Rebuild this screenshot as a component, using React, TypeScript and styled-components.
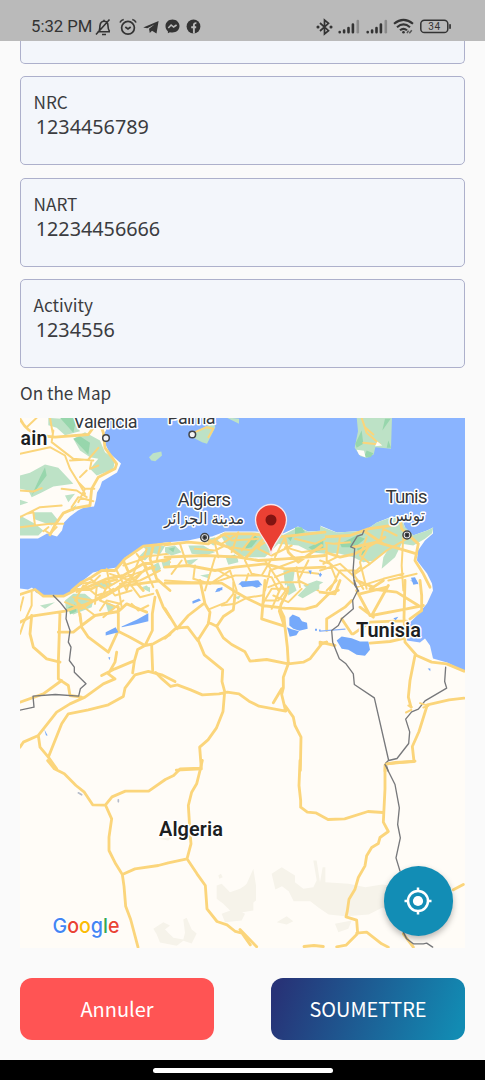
import React from 'react';
import styled, { createGlobalStyle } from 'styled-components';

const GlobalStyle = createGlobalStyle`
  * { box-sizing: border-box; }
  html, body { margin: 0; padding: 0; background: #fafafa; overflow: hidden; }
  button { font: inherit; border: 0; padding: 0; cursor: pointer; }
`;

const uiFont = `'Noto Sans CJK SC', 'Noto Sans', sans-serif`;

const Screen = styled.div`
  width: 485px;
  height: 1080px;
  display: flex;
  flex-direction: column;
  background: #fafafa;
  color: #3b3c40;
  font-family: ${uiFont};
  overflow: hidden;
`;

const StatusBar = styled.header`
  height: 41px;
  flex: none;
  display: flex;
  justify-content: space-between;
  background: #bababa;
  color: #333;
  padding: 12.5px 33.5px 0 31px;
`;

const StatusGroup = styled.div<{ $gap: number }>`
  display: flex;
  align-items: center;
  height: 28px;
  gap: ${(p) => p.$gap}px;
  svg { display: block; flex: none; }
`;

const Clock = styled.span`
  font: 400 16.7px/28px Roboto, sans-serif;
  width: 62px;
  margin-right: -4px;
  white-space: nowrap;
`;

const Form = styled.main`
  flex: 1;
  padding: 0 20px;
  display: flex;
  flex-direction: column;
`;

const Field = styled.label<{ $clipped?: boolean }>`
  display: flex;
  flex-direction: column;
  flex: none;
  height: ${(p) => (p.$clipped ? '22.5px' : '89px')};
  margin-bottom: 12.5px;
  padding: 14px 12.5px 0;
  background: #f3f6fb;
  border: 1.5px solid #adb0cb;
  border-radius: 5px;
  ${(p) => p.$clipped && 'border-top: 0; border-top-left-radius: 0; border-top-right-radius: 0;'}
`;

const FieldLabel = styled.span`
  font-size: 17.2px;
  line-height: 22px;
`;

const FieldValue = styled.span`
  font: 400 19.8px/26px 'Noto Sans', sans-serif;
  padding: 1px 0 0 2.2px;
`;

const SectionTitle = styled.h2`
  margin: 0;
  height: 37px;
  font-size: 17.1px;
  font-weight: 400;
  line-height: 24px;
  flex: none;
`;

const MapFrame = styled.section`
  position: relative;
  height: 530.5px;
  flex: none;
  overflow: hidden;
  > svg { display: block; }
`;

const LocateButton = styled.button`
  position: absolute;
  right: 12px;
  bottom: 12.5px;
  width: 69.5px;
  height: 69.5px;
  border-radius: 50%;
  background: #128db5;
  display: grid;
  place-items: center;
  box-shadow: 0 3px 6px rgba(0, 0, 0, 0.28);
`;

const Actions = styled.div`
  display: flex;
  justify-content: space-between;
  margin-top: 30px;
`;

const ActionButton = styled.button<{ $primary?: boolean }>`
  width: 194px;
  height: 62px;
  border-radius: 12px;
  color: #fff;
  font-size: ${(p) => (p.$primary ? '19.9px' : '20px')};
  line-height: 62px;
  background: ${(p) => (p.$primary ? 'linear-gradient(110deg, #273377 5%, #128bb3 95%)' : '#ff5454')};
`;

const NavBar = styled.footer`
  height: 20px;
  flex: none;
  display: flex;
  justify-content: center;
  background: #000;
  padding-top: 8px;
`;

const HomeHandle = styled.i`
  width: 180px;
  height: 4.5px;
  border-radius: 3px;
  background: #fff;
`;

const BellOff = () => (
  <svg width="17" height="18" viewBox="0 0 17 18" fill="none" stroke="#333" strokeWidth="1.6">
    <path d="M2.500 13.800h12.500M4 13.300c1-2 .7-4 1-6C5.500 4.500 7 3.300 9 3.300c2.500 0 4 2 4 4.700 0 2 .3 3.500 1.500 5.300M9 3.300V1.800M7 16.500h4M1 16.500 14.500 1.500" />
  </svg>
);

const AlarmClock = () => (
  <svg width="18" height="18" viewBox="0 0 18 18" fill="none" stroke="#333" strokeWidth="1.7">
    <circle cx="9" cy="9.800" r="6.400" />
    <path d="m6.300 9 2.700 2 2.700-2M1 4.500Q2 2 4.700 1.500M17 4.500Q16 2 13.300 1.500" />
  </svg>
);

const Telegram = () => (
  <svg width="16" height="16" viewBox="0 0 16 16" fill="#333">
    <path d="M.2 8.400 15.600 2 13.500 14.500 9 11.700l-2.200 2.300-.8-4.200L11.500 5.500 4.300 9.300z" />
  </svg>
);

const Messenger = () => (
  <svg width="15" height="15" viewBox="0 0 15 15">
    <path fill="#333" d="M7.500.5C3.400.5.5 3.400.5 7.200c0 2.100.9 3.900 2.400 5v2.100l2-1.100c.8.300 1.700.4 2.600.4 4 0 7-2.800 7-6.500S11.500.5 7.500.5z" />
    <path d="m3.300 9 2.800-3 2.500 2 3-2" fill="none" stroke="#bababa" strokeWidth="1.600" />
  </svg>
);

const Facebook = () => (
  <svg width="15" height="15" viewBox="0 0 15 15">
    <circle cx="7.500" cy="7.500" r="6.900" fill="#333" />
    <path d="M7.900 14.500V5.800q0-1.900 2.500-1.600M5.200 8.300h5" fill="none" stroke="#bababa" strokeWidth="1.900" />
  </svg>
);

const Bluetooth = () => (
  <svg width="17" height="18" viewBox="0 0 17 18" fill="none" stroke="#333" strokeWidth="1.700">
    <path d="m4 5 8.500 7.700L8.500 16V2l4 3.300L4 13" />
    <circle cx="2" cy="9" r=".7" fill="#333" />
    <circle cx="15" cy="9" r=".7" fill="#333" />
  </svg>
);

const Signal = () => (
  <svg width="22" height="15" viewBox="0 0 22 15" strokeWidth="2.600" strokeLinecap="round">
    <path d="M1.700 13v.2M6.100 11.500v1.700M10.500 9v4.200M14.900 5.500v7.700" stroke="#333" />
    <path d="M19.800 2v11.200" stroke="#8b8b8b" />
  </svg>
);

const Wifi = () => (
  <svg width="21" height="17" viewBox="0 0 21 17" fill="none" stroke="#333" strokeWidth="2.100">
    <path d="M1 5.700Q10.500-2 20 5.700M4 9.200q6.500-5.500 13 0M7 12.300q3.500-3 7 0" />
    <circle cx="10.500" cy="14.300" r="1.300" fill="#333" stroke="none" />
    <path d="m14 15.200 1.500-2.500M16.300 15.200l2.500-3" stroke="#555" strokeWidth="1.500" />
  </svg>
);

const Battery = () => (
  <svg width="32" height="15" viewBox="0 0 32 15">
    <rect x=".8" y="1.200" width="27" height="12.300" rx="3.600" fill="none" stroke="#333" strokeWidth="1.500" />
    <rect x="29.200" y="5" width="1.700" height="5" rx=".8" fill="#333" />
    <text x="14.200" y="10.900" textAnchor="middle" fontFamily="Roboto" fontSize="10" textLength="12" fill="#333">34</text>
  </svg>
);

const Tile = styled.g`
  fill: none;
  stroke-linejoin: round;
  stroke-linecap: round;
  .road { stroke: #fbd57b; stroke-width: 8.500px; }
  .minor { stroke: #fbd57b; stroke-width: 6px; }
  .border { stroke: #77787b; stroke-width: 4px; }
  .green { fill: #bde2c6; }
  .wood { fill: #97d6ac; }
  .water { fill: #75a9fa; }
  .sand { fill: #f6f3ea; }
`;

const PlaceName = styled.text<{ $bold?: boolean; $size?: number }>`
  font-family: Roboto, 'DejaVu Sans', sans-serif;
  font-size: ${(p) => p.$size ?? 19}px;
  font-weight: ${(p) => (p.$bold ? 600 : 400)};
  fill: ${(p) => (p.$bold ? '#1d1e21' : '#34373c')};
  stroke: #fff;
  stroke-width: 3px;
  stroke-linejoin: round;
  paint-order: stroke;
`;

const at = (x: number, y: number) => `translate(${x} ${y}) scale(.33333)`;

const CityDot = ({ x, y, capital }: { x: number; y: number; capital?: boolean }) => (
  <g stroke="#424448" strokeWidth="1.500">
    <circle cx={x} cy={y} r={capital ? 4 : 3.300} fill="#f4f4f4" />
    {capital && <circle cx={x} cy={y} r="1.700" fill="#222" />}
  </g>
);

const logo: [string, string][] = [
  ['G', '#4285f4'], ['o', '#ea4335'], ['o', '#fbbc05'], ['g', '#4285f4'], ['l', '#34a853'], ['e', '#ea4335'],
];

const MapDrawing = () => (
  <svg width="445" height="531" viewBox="20 417.500 445 531">
    <rect x="20" y="417" width="445" height="532" fill="#8ab4ff" />
    <g fill="#fffcf7">
      <path d="M20 417H111L106 430 103 435 105 443 110 453 121 463 117 472 107 478 102 481 100 487 97 492 96 499 94 506 84 507 78 510 70 516 64 522 62 530 57 536 47 533 38 538 20 538Z" />
      <path d="M20 588 28 589 32 587 36 592 43 595 53 595 65 595 73 590 82 584 83 580 93 572 110 568 117 567 125 557 143 546 165 542 188 540 202 537 212 536 225 531 255 531 283 533 298 526 308 531 325 530 320 525 337 532 353 531 365 530 377 522 392 516 402 518 405 527 413 535 427 530 433 527 433 533 425 540 418 550 417 560 427 573 432 583 433 590 427 603 417 615 410 622 408 630 407 640 420 642 425 638 430 645 433 658 447 662 465 671V949H20Z" />
    </g>

    {/* south-east Spain */}
    <Tile transform={at(10, 410)}>
      <path className="green" d="m115 22 75 5 20 35-45 12-25-22-25-8zM190 85l35-20 45 25 15 35 30 22-5 30-50 18-20-20 25-30-25-5-30-20zM30 195l30-8 45-25 40 10 45 48-60 8-35 18-30 14-10-20-25-5zM70 305l55 0 20 25-20 15-55-20zM30 315l45 25 25 20-15 15H30zM165 255l30-5-20 25zM175 300l25-18-10 20zM30 268l25 8-25 8z" />
      <path className="wood" d="m105 170 5 25-45 60 25-55zM190 85l20-8 30 20-5 35zM150 22h50l-10 45z" />
      <path className="green" d="m417 140 12-12 25-5 2 12-20 17-12-2z" />
      <path className="road" d="M30 25q20 40 60 50l45 5 100-8 22-30V22M265 22l15 45 5 45 35 48-5 15-50 25-20 35-5 50-45 8-35 15-25 35-15 30" />
      <path className="minor" d="m30 130 90-20 45 25 15 40 25 40 20 35M130 60l-5 35 65 50 60 5M120 22l8 45M30 240l40 3 25-10M30 320l60-30 65-5M155 235l45 5 30 20M30 350l90-10 40 0M100 362l15-12M205 215l20 20 28 0M180 150l55-3 30-35M210 200l20-20M185 290l20-30 45 12M75 345l-5-40-20 5M225 235l-20 40M265 165l-25 10 5-25M80 22 50 50M140 350l-20 20-15-10" />
    </Tile>

    {/* Balearic islands */}
    <Tile transform={at(165, 410)}>
      <path className="green" d="m70 75 75-40 6 15-25 50-15-5-20-10zM182 20l40 5v15z" />
      <path className="minor" d="m90 65 35-15 20 5-15 25" />
    </Tile>

    {/* Sardinia, northern Tunisia */}
    <Tile transform={at(320, 410)}>
      <path className="green" d="M110 20h106l-3 95-47-5-5 22-20 10-20-5-17-25 10-50z" />
      <path className="wood" d="m125 60 5 40-20 12-4-12zM195 25l17 0-25 35zM205 90l8 22-13 0zM140 120l20 8-8 12-20 0z" />
      <path className="minor" d="m125 22 15 45 40 35-50-5M135 50l25 22" />
      <path d="m110 118 22 3 5 20-20-8zM172 93l15 12-22 2z" fill="#fffcf7" />
      <path className="green" d="M0 347 50 366 100 363 135 360 170 336 215 320 245 326 255 350 280 374 320 361 340 351 336 368 315 385 280 405 245 400 225 440 185 475 190 440 205 415 165 450 130 455 100 440 60 430 0 425Z" />
      <path className="wood" d="m60 400 50-25 25 10-30 25-40 0zM110 415l45-15-30 35z" />
      <path className="road" d="m0 380 90-5 55-20 70-10 30-12M240 325l5 30 50 45-10 50 25 40 20 40M100 410l70-15 70 20 50 15M130 360l60 40M0 420l60 20 45-10 90-50" />
      <path className="minor" d="m105 490 45-30 50-40 60-35M150 400l-30 55 20 80M250 375l-5 90 5 75M20 400l0 50 80 70M205 510l85-20M0 480l60-20 45 40M150 460l-30-25 20-55M60 380l-10 60-40 20M110 530l80-25 60-15M30 540l30-60 45 0M120 470l-20 20 30 45M180 395l10-40 40 20M0 395l40 5 50-5M0 450l30 10 20 50-30 30" />
      <path className="water" d="m273 502 12-2 10 20-15 3zM0 485l6 8-6 6z" />
    </Tile>

    {/* Oran and the north-west coast */}
    <Tile transform={at(10, 580)}>
      <path className="green" d="m165 60 25-20 35 0 25 20-5 20-55 22-22-15zM250 10l40-8 25 10-40 12zM90 75l45-10-30 20zM285 62l35 15-25 20zM390 20l30 0 0 15z" />
      <path className="wood" d="m175 80 20-8 5 20-20 10z" />
      <path className="road" d="m30 42 45-15 25 20 60 0 40-20 40 0 40-20 40-10M30 125l35-18 100-15 60-20 60-25 50-30 110-15M150 95l-5 150 0 50 30 20 5 30 35 5M155 300l-55 40-70 25M30 500l10-15 45-20 55-70 40-25 45-20 55-40 35-15-20-15 20-35 5-30M275 285l40-20 55-23M85 465l5 35 25 30 25 35M115 530l40-100 20-30 60-12 60-15 45-25 5-25 30-40 40-10 40 10 40 20" />
      <path className="road" d="m65 105-5 55 10 40 40 35 40 10M145 155l45 0 25-20 40-30 70-12 25-23 60 25M210 100l5 40 20 30 60 45M325 80l0 70-30 65M320 150l40 20 45 25 25-5 50-28M435 50l-8 50 0 50-22 45-22 12-10 35-5 35M425 195l3 75M440 30l20 50 20 30" />
      <path className="minor" d="m30 160 10-30 25-55 0-40M220 15l-25 45 60 45M165 65l50 20 60-40M260 20l-5 50M280 0l35 45 50-15M325 20l10 60M190 50l60 10 60-35M365 70l20 20 30-15M340 60l-60 50M230 20l30 25 60-20M30 90l10-40M200 55l15 85M240 5l-40 30M290 20l-20 40 50 20M360 10l30 40 40-10M330 70l-40-10-20 30" />
      <path className="water" d="m287 155 30-15 8 15-38 10zM335 138l45-20 35-20 0 24-40 10-40 8zM103 447l10 18-5 0zM295 230h6l-3 9z" />
      <path className="border" d="m130 45 20 20 20 25-2 25 12 35-5 35 8 15-5 40 15 20 0 15 35 35-17 15-5 22-70-5-67 5 3 33-48 10" />
    </Tile>

    {/* Algiers to the eastern coast */}
    <Tile transform={at(10, 410)}>
      <path className="green" d="m385 440 25-25 25 5-30 30zM420 470l25-15 8 20-20 18zM455 455l25-10 0 25-20 3zM400 410l40-8 25 5-15 25-30-5zM395 530l15-5 10 10zM250 525l25-12 5 15z" />
      <path className="road" d="m185 540 30-25 30-15 30-20 40 0 30-35 55-38 80-8M210 540l80-35 50-10 60-35 80-15M340 450l20 45 40 45M430 405l-10 40 20 60 40 35" />
      <path className="minor" d="m240 505 45 30 60-35 90-30M290 475l10 50M380 430l30 40-40 45M370 490l20-50 85-10M320 480l30 60M400 460l30 70M450 410l-10 40 40 5M300 490l60 20 60-40M310 540l60-45M270 495l-20 20-40 5M340 465l60-20 10-30M330 520l60-10 60-30M350 540l10-30" />
    </Tile>
    <Tile transform={at(165, 410)}>
      <path className="green" d="M165 372 180 366 270 366 355 373 400 350 430 364 480 360V430L440 425 400 405 340 400 300 440 245 440 210 430 185 405ZM0 410 30 405 50 425 20 435 0 425ZM70 405 115 405 150 425 120 435 80 430ZM60 450 100 445 75 465ZM120 388 150 380 165 395 145 405Z" />
      <path className="wood" d="m250 395 20-20 10 10-20 25-20 5zM430 410l45-20 0 25-25 10zM390 350l20 0 10 15-30 8zM365 378l20-6-8 20zM185 440l25-8 10 20-30 8zM10 415l20-5-5 15z" />
      <path className="green" d="m355 480 35-5-5 35-25 15zM415 525l40-15 20 5-40 25zM105 495l30-5 0 15zM180 435l35 0 5 20-30 8zM0 455l15-5v18l-15 4z" />
      <path className="road" d="m0 403 70-8 60 5 50-30 80 0 80 10 140-15M0 440l120-5 100 5 60 10 80-5 120-10M0 470l70-5 80 15 60-10 90-10 60 15 120-5M130 390l60 20 50 35 70-75M360 385l10 40 30 30 70-50" />
      <path className="minor" d="m90 465-5 40 50 15 60-40 20 60M0 510l80 5 70 0 60-20 80 0 30-50M150 440l-30 100M240 450l20 40 60 10 20 40M300 450l60 90M330 500l50-20 80 10M300 540l15-60 80-30M395 470l10 60M430 450l-30 60 60 30M220 365l-20 60M270 370l-40 50M150 400l10 40M45 400l20 60M160 480l35 20M360 380l-30 60M120 385l50 15 40-25M300 375l-20 40 40 20 60-30M180 375l20 15 80-5M390 385l60 15 30-15M90 415l60 5 30-15M360 410l50 15 70-10M200 410l60 10 50-30M20 490l30-40M240 520l10-30" />
      <path className="water" d="m225 522 25-10 30-3 12 15-60 6zM430 480l10 0-3 12zM460 488l10 4-5 8zM152 537l20-6v8z" />
    </Tile>

    {/* high plateaus and the northern Sahara */}
    <Tile transform={at(165, 580)}>
      <path className="green" d="m398 45 30-30 35-10 0 20-50 28zM365 10l20-5 10 25-25 15zM208 50l20-5-8 12z" />
      <path className="road" d="m0 8 100 0 70 0 40 25 35 20 45 22 70 8 60 3 35-10 35-35 30-12M105 0l15 70 15 25-5 35-32 50-30-40-35 3-33 30M0 85l37 60M40 140l30-35 45-35M130 125l25 12 20 35 25 20 40 22 15 28 50-5 65 13 45-5 20-10 35-45 15-5M155 138l20-30 30-20 5-45M300 0l-5 55-5 60 30 10 38 12-15-45 5-20 20-40M345 85l12 25 3 30 7 60 3 50-15 40 0 32-5 20 12 50-80-15-30-15-30-22-35-5-25 5-50 3-35-15-40-15-20 5-25-22-20-20M98 175l20 48 55 45-2 35 8 30-5 60-20 50-25 35-25 22 5 65-75 4M350 325l-25 42M360 375l25 35 5 25 18 35-2 100" />
      <path className="minor" d="m135 85 50-20 20-25 0-35M170 75l40-5 35-18 50-8M310 20l40-15 50 0M320 85l30-70M290 75l30-50 50 0M325 45l45 20 40-40M300 60l40 0 30-40" />
      <path className="water" d="m82 62 20-8 6 6-25 10zM150 35l8-12 15-3-8 12zM220 12l10-10 35 0 22 15-12 5-20-8zM373 112l10-10 20 8 8 12 15 5 2 18-25 6-18-6-12-10zM366 140l14 6 22 6-8 12-20 5zM450 145h6v6h-6zM462 147h5v5h-5z" />
    </Tile>

    {/* central and southern Tunisia */}
    <Tile transform={at(320, 580)}>
      <path className="road" d="m255 0-3 110 3 75 35 40 45 20 45 5 52 22M0 185l45 10M150 188l60-5 45-10M155 105l50-90M300 0l5 45 0 45-35 25M155 105l105-20 50-10M285 225l-15 75-5 50 8 30M432 353l-45 5-65 15-25 80-20 45 5 45-55 3-30 5-2 20M0 35l45 5 15-40M110 30l40 75M120 40l80-20M150 25l80 10 65 40M20 150l0-35 55-35 20-20M95 160l-30-45M100 160l50-35 70-3 40 0M160 20l30-20M160 20l-50-20M120 80l40 30M0 190l20-5" />
      <path className="water" d="m50 180 15-12 30 5 25 10 25 0 5 25-15 18-25-3-25-15-20-3zM220 113l15-4-8 10zM323 264l8 0 0 8zM270 0h20l5 12z" />
      <path d="m0 152 75-6" stroke="#89b2f8" strokeWidth="4" />
      <path className="border" d="m103 0 10 30-15 30 2 25-35 30-10 20-20 15 3 35 20 50 20 15 22 30 3 32 60 40 43 188 25-6 35-45 3-35-12-38 18-22 20-8 20-25 65-38-6-20 3-43M205 540l-8 8 8 25" />
      <path className="minor" d="m258 396 16-8M265 375l10 5M300 368l25 8-15 5" />
    </Tile>
    <Tile transform={at(320, 410)}>
      <path className="border" d="m132 360-5 12-15 5-20 32 12 5-5 70 5 40 12 18" />
    </Tile>

    {/* southern Algeria */}
    <Tile transform={at(10, 760)}>
      <path className="sand" d="m625 345 8-5 5 10-10 5zM620 375l15-5 25 25 30-10 40-25 0 90-60 10-30-30-20-15zM635 460l40-15 30 15-10 20-50 5zM430 505l30-20 20 10-15 12 25 25 30 5 5-20-5-40 10-5 15 35 15 12-15 30-25-8-20 15-50-10-10-25zM445 235l40-5-10 10z" />
      <path className="road" d="m113 0 20 25 30 15 35 35 25 20 25 38 38 1 20-25 40-17 70 0 50-35 25-12 20-20 60-2M577 0l-7 30-10 40-15 25-10 40 5 80 3 35-12 45 30 45 25 35 5 70 30 38 30 10 25 20 20 5 25 35M531 295l-56 12-30 8-70 10-38 17M287 135l18 40-8 55 0 40 20 40 20 32 5 35 5 60 15 40 22 83" />
      <path d="m205 97 10 6M325 118v6" stroke="#b5bccb" strokeWidth="5" />
    </Tile>
    <Tile transform={at(240, 760)}>
      <path className="sand" d="m0 390 20-20 20-45 8 50 0 45-20 15-28 10zM95 340l30-20 40 25 0 20 25 20 30-5 10-20-10-60 10 0 10 65 8-45 8 0 0 45 70 5 50 10 50-8 40 5 0 60-40 5-40 20-70 5-50-5-30-20-25-20-50 0-15-30-20-15-20 10zM110 485l30-18 20 15-20 10zM285 490l50-10-10 25-30 10z" />
      <path className="road" d="m180 0-3 75 5 45 0 20 20 15 25 2 37 20 50-2 70-22 45 3M435 15l0 70-5 100 15 28-25 18-5 18-20 12-15 25-5 30-20 35-10 35-18 30-5 35-4 18 32 10 3 40-35 35-28 5M350 518l30-3 45 35 20 10M0 507l50 52M192 558l30-3 28 3M640 388l30-16M440 10l85-8M490 520l30 40" />
      <path className="border" d="m435 12 30 60 13 70-5 50 8 40-13 60 12 40M490 515l10 20 20 15 30 0 10-2 18 12" />
    </Tile>

    <CityDot x={106} y={437.500} />
    <CityDot x={192.300} y={434} />
    <CityDot x={204.700} y={537} capital />
    <CityDot x={407} y={534.500} capital />

    <PlaceName x="73.500" y="427" $size={18} textLength="64">Valencia</PlaceName>
    <PlaceName x="167.500" y="423" $size={18} textLength="48">Palma</PlaceName>
    <PlaceName x="20.500" y="444" $bold $size={19.500} textLength="27">ain</PlaceName>
    <PlaceName x="177.500" y="505.500" textLength="53.500">Algiers</PlaceName>
    <PlaceName x="204" y="523" $size={16} textAnchor="middle" textLength="80" lengthAdjust="spacingAndGlyphs">مدينة الجزائر</PlaceName>
    <PlaceName x="385.500" y="502.500" textLength="42">Tunis</PlaceName>
    <PlaceName x="407" y="520" $size={16} textAnchor="middle" textLength="36" lengthAdjust="spacingAndGlyphs">تونس</PlaceName>
    <PlaceName x="356" y="636.500" $bold $size={20} textLength="65">Tunisia</PlaceName>
    <PlaceName x="159" y="835.500" $bold $size={20} textLength="64">Algeria</PlaceName>

    <path d="M271 554.500C270 542 255.500 533 255.500 519.500a15.500 15.500 0 0 1 31 0C286.500 533 272 542 271 554.500Z" fill="#ea4033" stroke="#f8e9ed" strokeWidth="1.300" />
    <circle cx="271" cy="519.500" r="5.500" fill="#811411" />

    <text x="52.500" y="932.500" fontFamily="Inter, sans-serif" fontSize="20.500" fontWeight="500" textLength="67" lengthAdjust="spacingAndGlyphs" stroke="#fff" strokeWidth="2" style={{ paintOrder: 'stroke' }}>
      {logo.map(([letter, color], i) => <tspan key={i} fill={color}>{letter}</tspan>)}
    </text>
  </svg>
);

const LocateIcon = () => (
  <svg width="28" height="28" viewBox="0 0 28 28" fill="none" stroke="#fff" strokeWidth="2.500">
    <circle cx="14" cy="14" r="10" />
    <circle cx="14" cy="14" r="5.100" fill="#fff" stroke="none" />
    <path d="M14 .5V4M14 24v3.500M.5 14H4M24 14h3.500" />
  </svg>
);

const fields = [
  { label: 'NRC', value: '1234456789' },
  { label: 'NART', value: '12234456666' },
  { label: 'Activity', value: '1234556' },
];

export default function App() {
  return (
    <>
      <GlobalStyle />
      <Screen>
        <StatusBar>
          <StatusGroup $gap={6.300}>
            <Clock>5:32 PM</Clock>
            <BellOff />
            <AlarmClock />
            <Telegram />
            <Messenger />
            <Facebook />
          </StatusGroup>
          <StatusGroup $gap={5.500}>
            <Bluetooth />
            <Signal />
            <Signal />
            <Wifi />
            <Battery />
          </StatusGroup>
        </StatusBar>
        <Form>
          <Field $clipped />
          {fields.map((f) => (
            <Field key={f.label}>
              <FieldLabel>{f.label}</FieldLabel>
              <FieldValue>{f.value}</FieldValue>
            </Field>
          ))}
          <SectionTitle>On the Map</SectionTitle>
          <MapFrame>
            <MapDrawing />
            <LocateButton aria-label="Locate me"><LocateIcon /></LocateButton>
          </MapFrame>
          <Actions>
            <ActionButton>Annuler</ActionButton>
            <ActionButton $primary>SOUMETTRE</ActionButton>
          </Actions>
        </Form>
        <NavBar><HomeHandle /></NavBar>
      </Screen>
    </>
  );
}
